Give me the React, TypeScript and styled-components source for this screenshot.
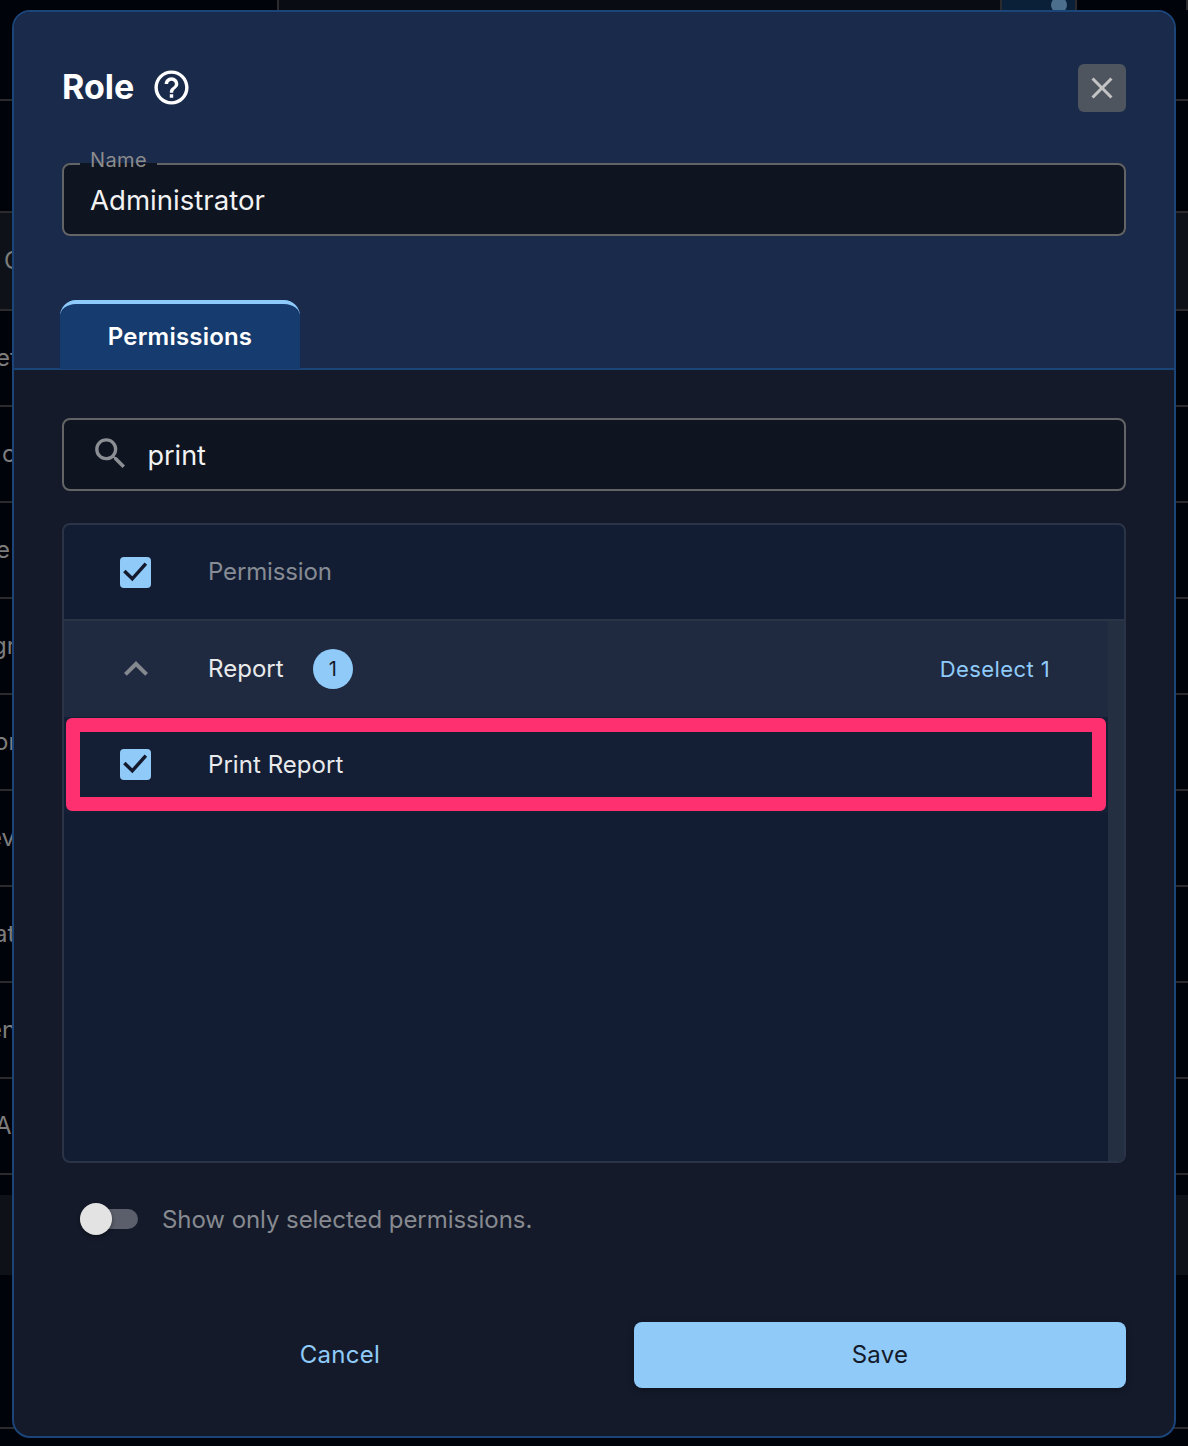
import React from 'react';
import styled, { createGlobalStyle } from 'styled-components';
import { MdClose, MdExpandLess, MdHelpOutline, MdSearch } from 'react-icons/md';

const GlobalStyle = createGlobalStyle`
  html,
  body {
    margin: 0;
    padding: 0;
    background: #01030b;
  }
  * {
    box-sizing: border-box;
  }
`;

const Page = styled.div`
  position: relative;
  width: 1188px;
  height: 1446px;
  overflow: hidden;
  background: #01030b;
  font-family: Inter, 'Noto Sans', sans-serif;
`;

/* table of the page behind the dialog */
const Backdrop = styled.div`
  display: flex;
  flex-direction: column;
`;

const TopRow = styled.div`
  display: flex;
  height: 101px;
  border-bottom: 2px solid #2b2b2d;
`;

const TopCell = styled.div<{ $width: number; $tint?: string }>`
  flex: ${(p) => (p.$width ? `0 0 ${p.$width}px` : '1')};
  height: 10px;
  background: ${(p) => p.$tint || 'transparent'};
  border-right: 2px solid #2b2b2d;
`;

const ToggleCell = styled(TopCell)`
  display: flex;
  justify-content: flex-end;
  padding-right: 8px;
`;

const Knob = styled.span`
  width: 16px;
  height: 16px;
  margin-top: -3px;
  border-radius: 50%;
  background: #4c6f8e;
`;

const BackRow = styled.div<{ $height: number; $tint?: boolean; $line?: boolean }>`
  display: flex;
  align-items: center;
  flex: none;
  height: ${(p) => p.$height}px;
  padding-bottom: 2px;
  background: ${(p) => (p.$tint ? '#0e1218' : 'transparent')};
  border-bottom: ${(p) => (p.$line ? '2px solid #2b2b2d' : 'none')};
  color: #7d7d7d;
  font-size: 24px;
  white-space: nowrap;
`;

const BackText = styled.span<{ $offset: number }>`
  margin-left: ${(p) => p.$offset}px;
`;

const Modal = styled.div`
  position: absolute;
  left: 12px;
  top: 10px;
  width: 1164px;
  height: 1428px;
  display: flex;
  flex-direction: column;
  overflow: hidden;
  background: #141a2a;
  border: 2px solid #1b4479;
  border-radius: 18px;
`;

const Header = styled.header`
  height: 358px;
  flex: none;
  display: flex;
  flex-direction: column;
  padding: 52px 48px 0;
  background: #1a2a4b;
  border-bottom: 2px solid #1b4479;
`;

const TitleRow = styled.div`
  display: flex;
  align-items: center;
  height: 48px;
  color: #fff;
`;

const Title = styled.h2`
  margin: 0 17px 2px 0;
  font-size: 34px;
  font-weight: 700;
  line-height: 46px;
`;

const HelpIcon = styled(MdHelpOutline)`
  margin-bottom: 1px;
`;

const CloseButton = styled.button`
  display: flex;
  align-items: center;
  justify-content: center;
  width: 48px;
  height: 48px;
  margin-left: auto;
  padding: 0;
  border: 0;
  border-radius: 6px;
  background: #4f555e;
  color: #c4c4c4;
`;

const NameField = styled.fieldset`
  flex: none;
  height: 88px;
  min-width: 0;
  margin: 36px 0 0;
  padding: 3px 26px 0;
  background: #0e1420;
  border: 2px solid #636466;
  border-radius: 8px;
`;

const Legend = styled.legend`
  margin-left: -10px;
  padding: 0 10px 8px;
  color: #8c8c8c;
  font-size: 20px;
  line-height: 24px;
  letter-spacing: 0.4px;
`;

const FieldValue = styled.div`
  color: #f2f2f2;
  font-size: 27.6px;
  line-height: 34px;
`;

const SearchField = styled.div`
  display: flex;
  align-items: center;
  height: 73px;
  flex: none;
  padding-left: 26px;
  background: #0e1420;
  border: 2px solid #636466;
  border-radius: 8px;
  color: #8b8e93;
`;

const SearchIcon = styled(MdSearch)`
  flex: none;
  margin-bottom: 2px;
`;

const SearchValue = styled(FieldValue)`
  margin: 2px 0 0 16.5px;
  font-size: 27px;
`;

const Tab = styled.div`
  display: flex;
  align-items: center;
  justify-content: center;
  width: 240px;
  height: 69px;
  margin: auto 0 -1px -2px;
  background: #163b6e;
  border-top: 4px solid #8ecafc;
  border-radius: 16px 16px 0 0;
  color: #fff;
  font-size: 24px;
  font-weight: 600;
  letter-spacing: 0.2px;
`;

const Body = styled.div`
  flex: 1;
  display: flex;
  flex-direction: column;
  padding: 48px;
`;

const TableBox = styled.div`
  flex: none;
  height: 640px;
  margin-top: 32px;
  overflow: hidden;
  background: #121d33;
  border: 2px solid #2a3446;
  border-radius: 8px;
`;

const HeadRow = styled.div`
  display: flex;
  align-items: center;
  height: 96px;
  padding-left: 56px;
  border-bottom: 2px solid #2a3446;
`;

const ScrollArea = styled.div`
  height: 540px;
  border-right: 16px solid #252f42;
`;

const Row = styled.div<{ $group?: boolean }>`
  position: relative;
  display: flex;
  align-items: center;
  height: 96px;
  padding: 0 58px 0 56px;
  background: ${(p) => (p.$group ? '#1f2a40' : '#141e35')};
`;

const Marker = styled.div`
  position: absolute;
  left: 2px;
  right: 2px;
  top: 1px;
  height: 93px;
  border: 14px solid #ff3070;
  border-radius: 6px;
  pointer-events: none;
`;

const Box = styled.span`
  flex: none;
  display: flex;
  width: 31px;
  height: 31px;
  margin-right: 1px;
  border-radius: 4px;
  background: #90caf9;
`;

const RowBox = styled(Box)`
  margin-bottom: 1px;
`;

const ToggleIcon = styled.span`
  flex: none;
  display: flex;
  justify-content: center;
  width: 32px;
  color: #85888e;

  svg {
    flex: none;
  }
`;

const Label = styled.span<{ $muted?: boolean }>`
  margin-left: 56px;
  color: ${(p) => (p.$muted ? '#868b94' : '#e9eaec')};
  font-size: 24px;
  line-height: 32px;
  letter-spacing: ${(p) => (p.$muted ? '-0.15px' : '0.05px')};
`;

const Count = styled.span`
  display: flex;
  align-items: center;
  justify-content: center;
  width: 40px;
  height: 40px;
  margin-left: 29px;
  border-radius: 50%;
  background: #90caf9;
  color: #141a2a;
  font-size: 20px;
`;

const Deselect = styled.a`
  margin-left: auto;
  color: #90caf9;
  font-size: 22px;
  letter-spacing: 0.4px;
`;

const SwitchRow = styled.label`
  display: flex;
  align-items: center;
  height: 32px;
  margin-top: 40px;
  padding-left: 18px;
`;

const Track = styled.span`
  position: relative;
  width: 58px;
  height: 20px;
  border-radius: 10px;
  background: #5a5f6b;
`;

const Thumb = styled.span`
  position: absolute;
  left: 0;
  top: -6px;
  width: 32px;
  height: 32px;
  border-radius: 50%;
  background: #e3e3e3;
  box-shadow: 0 2px 4px rgba(0, 0, 0, 0.4);
`;

const SwitchText = styled.span`
  margin-left: 24px;
  color: #878a90;
  font-size: 24px;
  letter-spacing: -0.06px;
`;

const Footer = styled.footer`
  display: flex;
  align-items: stretch;
  gap: 16px;
  height: 66px;
  margin-top: auto;
`;

const FooterButton = styled.button`
  padding: 0 0 2px;
  border: 0;
  border-radius: 8px;
  font-family: inherit;
  font-size: 24px;
  letter-spacing: 0.3px;
`;

const CancelButton = styled(FooterButton)`
  width: 556px;
  background: transparent;
  color: #90caf9;
`;

const SaveButton = styled(FooterButton)`
  width: 492px;
  background: #90caf9;
  color: #141a2a;
  box-shadow: 0 2px 6px rgba(0, 0, 0, 0.3);
`;

const Check = () => (
  <svg width="31" height="31" viewBox="0 0 32 32" fill="none">
    <path d="M4.5 14.5 L12.7 22.5 L26.7 6.9" stroke="#141a2e" strokeWidth="3.6" />
  </svg>
);

const backRows = [
  { height: 112, text: '', offset: 0, line: true },
  { height: 98, text: 'C', offset: 4, line: true, tint: true },
  { height: 96, text: 'et', offset: -4, line: true },
  { height: 96, text: 'c', offset: 2, line: true },
  { height: 96, text: 'e', offset: -4, line: true },
  { height: 96, text: 'gr', offset: -8, line: true },
  { height: 96, text: 'or', offset: -6, line: true },
  { height: 96, text: 'ev', offset: -12, line: true },
  { height: 96, text: 'at', offset: -6, line: true },
  { height: 96, text: 'en', offset: -12, line: true },
  { height: 96, text: 'Ac', offset: -5, line: true },
  { height: 20, text: '', offset: 0 },
  { height: 80, text: '', offset: 0, tint: true },
  { height: 154, text: '', offset: 0, line: true },
];

export default function App() {
  return (
    <Page>
      <GlobalStyle />
      <Backdrop>
        <TopRow>
          <TopCell $width={279} />
          <TopCell $width={723} $tint="#0a0c14" />
          <ToggleCell $width={75} $tint="#0a2038">
            <Knob />
          </ToggleCell>
          <TopCell $width={0} />
        </TopRow>
        {backRows.map((row, i) => (
          <BackRow key={i} $height={row.height} $tint={row.tint} $line={row.line}>
            {row.text && <BackText $offset={row.offset}>{row.text}</BackText>}
          </BackRow>
        ))}
      </Backdrop>
      <Modal>
        <Header>
          <TitleRow>
            <Title>Role</Title>
            <HelpIcon size={41} />
            <CloseButton>
              <MdClose size={36} />
            </CloseButton>
          </TitleRow>
          <NameField>
            <Legend>Name</Legend>
            <FieldValue>Administrator</FieldValue>
          </NameField>
          <Tab>Permissions</Tab>
        </Header>
        <Body>
          <SearchField>
            <SearchIcon size={41} />
            <SearchValue>print</SearchValue>
          </SearchField>
          <TableBox>
            <HeadRow>
              <Box>
                <Check />
              </Box>
              <Label $muted>Permission</Label>
            </HeadRow>
            <ScrollArea>
              <Row $group>
                <ToggleIcon>
                  <MdExpandLess size={48} />
                </ToggleIcon>
                <Label>Report</Label>
                <Count>1</Count>
                <Deselect>Deselect 1</Deselect>
              </Row>
              <Row>
                <RowBox>
                  <Check />
                </RowBox>
                <Label>Print Report</Label>
                <Marker />
              </Row>
            </ScrollArea>
          </TableBox>
          <SwitchRow>
            <Track>
              <Thumb />
            </Track>
            <SwitchText>Show only selected permissions.</SwitchText>
          </SwitchRow>
          <Footer>
            <CancelButton>Cancel</CancelButton>
            <SaveButton>Save</SaveButton>
          </Footer>
        </Body>
      </Modal>
    </Page>
  );
}
